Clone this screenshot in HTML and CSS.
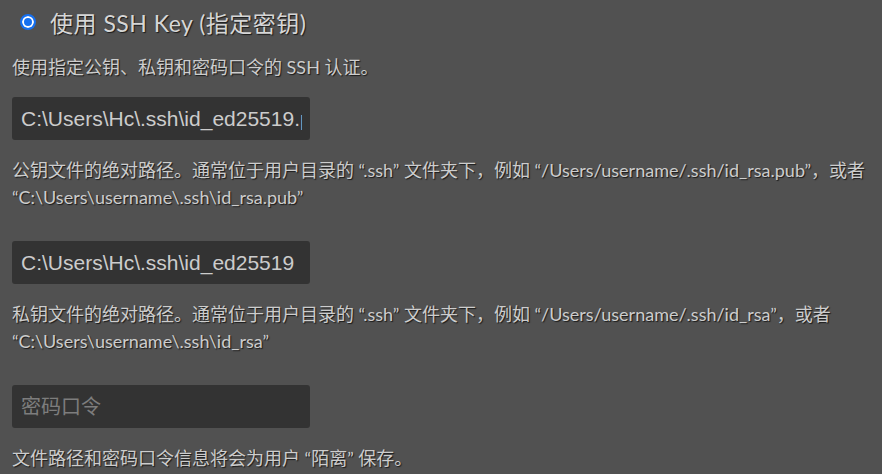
FILE: index.html
```html
<!DOCTYPE html>
<html lang="zh-CN">
<head>
<meta charset="utf-8">
<title>SSH Key</title>
<link rel="stylesheet" href="styles.css">
</head>
<body>
<div class="panel">
  <label class="option">
    <span class="radio"></span>
    <span class="option-title">使用 SSH Key (指定密钥)</span>
  </label>
  <p class="desc first">使用指定公钥、私钥和密码口令的 SSH 认证。</p>

  <div class="field">
    <input class="text-input" type="text" value="C:\Users\Hc\.ssh\id_ed25519.pub" readonly>
    <p class="desc">公钥文件的绝对路径。通常位于用户目录的 “.ssh” 文件夹下，例如 “/Users/username/.ssh/id_rsa.pub”，或者 “C:\Users\username\.ssh\id_rsa.pub”</p>
  </div>

  <div class="field">
    <input class="text-input" type="text" value="C:\Users\Hc\.ssh\id_ed25519" readonly>
    <p class="desc">私钥文件的绝对路径。通常位于用户目录的 “.ssh” 文件夹下，例如 “/Users/username/.ssh/id_rsa”，或者 “C:\Users\username\.ssh\id_rsa”</p>
  </div>

  <div class="field last">
    <input class="text-input" type="password" placeholder="密码口令">
    <p class="desc">文件路径和密码口令信息将会为用户 “陌离” 保存。</p>
  </div>
</div>
</body>
</html>
```

FILE: styles.css
```css
html, body {
  margin: 0;
  padding: 0;
  background: #515151;
}

.panel {
  padding: 0 4px 0 12px;
  font-family: "Lato", "Noto Sans CJK SC", sans-serif;
  color: #cdcdcd;
  text-shadow: 1px 1px 1px #1a1a1a;
}

.option {
  display: flex;
  align-items: center;
  height: 44px;
  gap: 14px;
  padding-left: 8px;
}

.radio {
  flex: none;
  width: 16px;
  height: 16px;
  border-radius: 50%;
  box-sizing: border-box;
  background: #1670f0;
  border: 2px solid #1670f0;
  box-shadow: inset 0 0 0 2px #ffffff;
  text-shadow: none;
}

.option-title {
  font-size: 23px;
  letter-spacing: 0.5px;
  color: #d6d6d6;
}

.desc {
  margin: 0;
  font-size: 18px;
  line-height: 27px;
}

.desc.first {
  margin-top: 10px;
  margin-bottom: 16px;
}

.field {
  margin-bottom: 30px;
}

.field.last {
  margin-bottom: 0;
}

.text-input {
  display: block;
  box-sizing: border-box;
  width: 298px;
  height: 43px;
  margin: 0 0 17px 0;
  padding: 0 8px 0 9px;
  border: none;
  border-radius: 3px;
  background: #333333;
  color: #cccccc;
  font-family: "Liberation Sans", Arial, sans-serif;
  font-size: 21px;
  outline: none;
  text-shadow: none;
}

.text-input::placeholder {
  color: #7d7d7d;
  font-family: "Noto Sans CJK SC", sans-serif;
  font-size: 20px;
}
```
